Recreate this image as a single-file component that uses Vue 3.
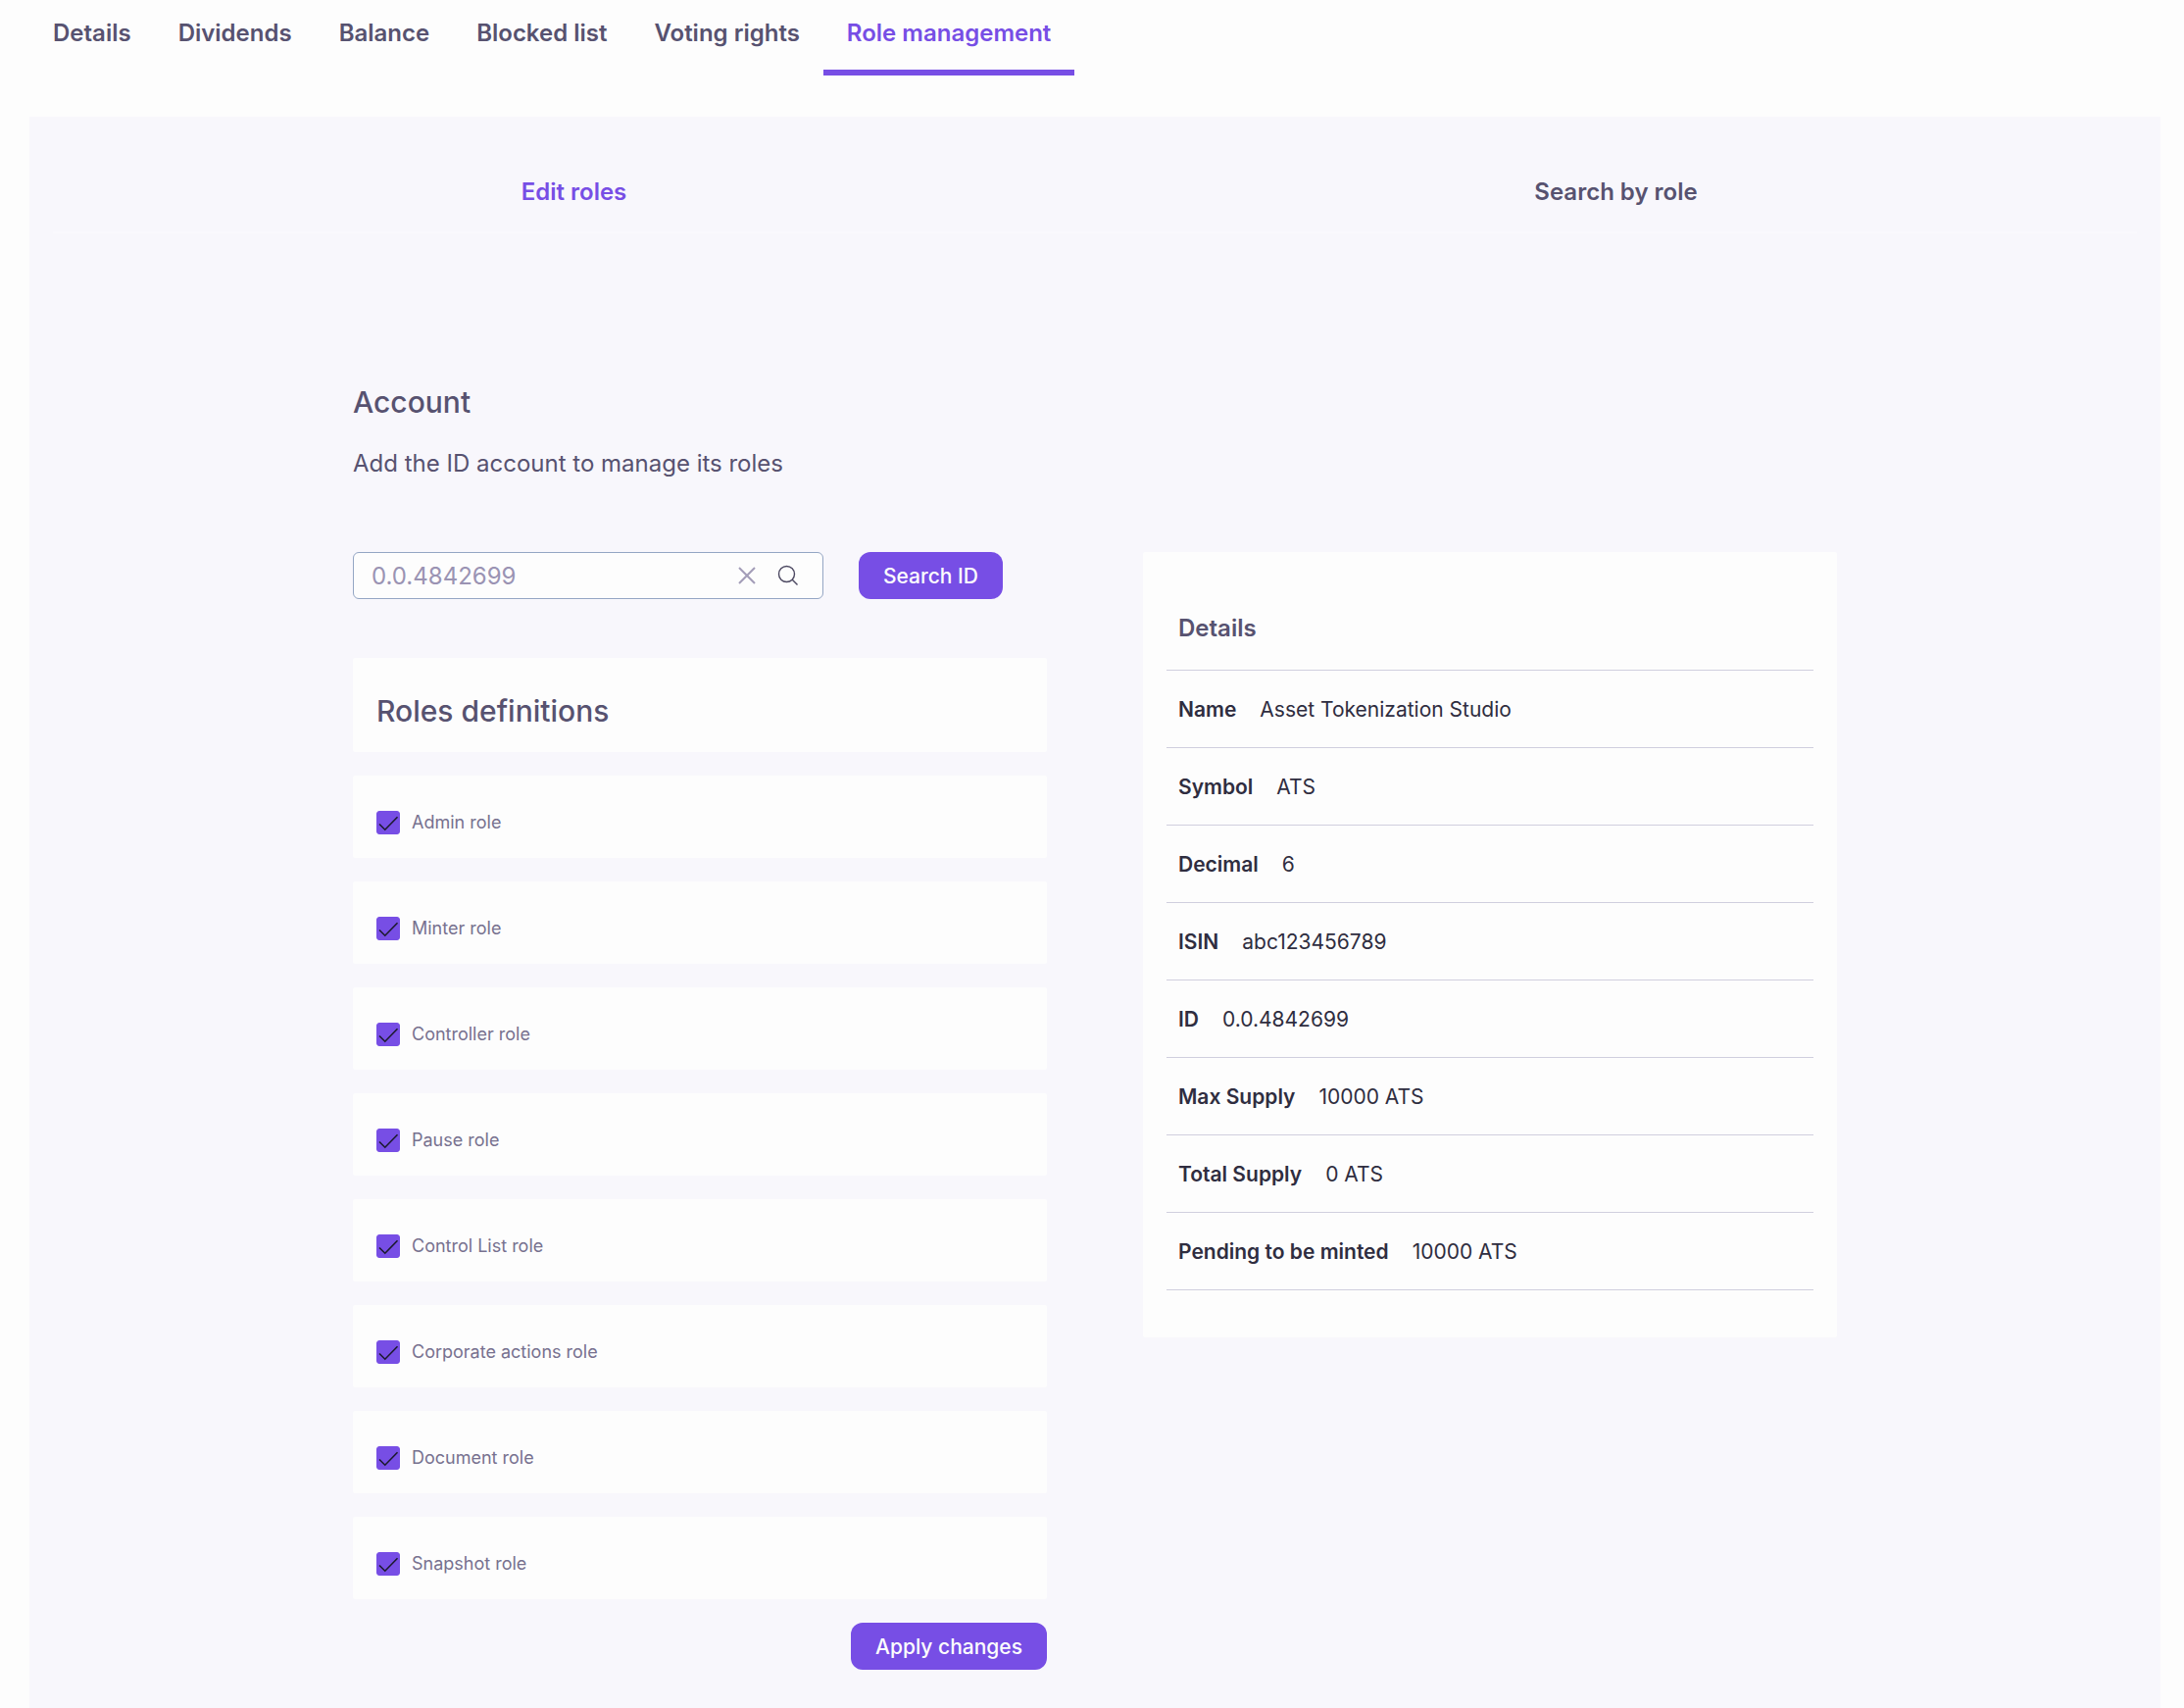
<script setup>
import { ref } from 'vue'

const tabs = ['Details', 'Dividends', 'Balance', 'Blocked list', 'Voting rights', 'Role management']
const activeTab = ref('Role management')

const modes = ['Edit roles', 'Search by role']
const activeMode = ref('Edit roles')

const accountId = ref('0.0.4842699')

const roles = ref([
  { id: 'admin', label: 'Admin role', granted: true },
  { id: 'minter', label: 'Minter role', granted: true },
  { id: 'controller', label: 'Controller role', granted: true },
  { id: 'pause', label: 'Pause role', granted: true },
  { id: 'control-list', label: 'Control List role', granted: true },
  { id: 'corporate-actions', label: 'Corporate actions role', granted: true },
  { id: 'document', label: 'Document role', granted: true },
  { id: 'snapshot', label: 'Snapshot role', granted: true }
])

const details = [
  ['Name', 'Asset Tokenization Studio'],
  ['Symbol', 'ATS'],
  ['Decimal', '6'],
  ['ISIN', 'abc123456789'],
  ['ID', '0.0.4842699'],
  ['Max Supply', '10000 ATS'],
  ['Total Supply', '0 ATS'],
  ['Pending to be minted', '10000 ATS']
]
</script>

<template>
  <div class="page">
    <nav class="tabs" role="tablist">
      <button
        v-for="tab in tabs"
        :key="tab"
        type="button"
        role="tab"
        class="tab"
        :class="{ active: tab === activeTab }"
        :aria-selected="tab === activeTab"
        @click="activeTab = tab"
      >{{ tab }}</button>
    </nav>

    <main class="panel">
      <div class="modes" role="tablist">
        <button
          v-for="mode in modes"
          :key="mode"
          type="button"
          role="tab"
          class="mode"
          :class="{ active: mode === activeMode }"
          :aria-selected="mode === activeMode"
          @click="activeMode = mode"
        >{{ mode }}</button>
      </div>

      <div class="content">
        <header class="intro">
          <h2 class="heading">Account</h2>
          <label class="hint" for="account-id">Add the ID account to manage its roles</label>
        </header>

        <div class="columns">
          <section class="column">
            <form class="search" @submit.prevent>
              <div class="field">
                <input id="account-id" v-model="accountId" class="field-input" type="text" />
                <button type="button" class="icon-button" aria-label="Clear" @click="accountId = ''">
                  <svg width="24" height="24" viewBox="0 0 24 24" fill="none" stroke="#a39db8" stroke-width="2">
                    <path d="M4 4 20 20M20 4 4 20" />
                  </svg>
                </button>
                <button type="submit" class="icon-button" aria-label="Search">
                  <svg width="24" height="24" viewBox="0 0 24 24" fill="none" stroke="#4c4861" stroke-width="1.4">
                    <circle cx="10.5" cy="10.5" r="8" />
                    <path d="M16 16 21.5 21.5" />
                  </svg>
                </button>
              </div>
              <button type="submit" class="primary">Search ID</button>
            </form>

            <form class="roles" @submit.prevent>
              <div class="card title-card">
                <h2 class="heading">Roles definitions</h2>
              </div>
              <div v-for="role in roles" :key="role.id" class="card role-card">
                <label class="role" :for="role.id">
                  <span class="tick">
                    <input :id="role.id" v-model="role.granted" type="checkbox" class="tick-input" />
                    <svg v-if="role.granted" class="tick-mark" viewBox="0 0 24 24" fill="none" stroke="#1c1a2e" stroke-width="1.6">
                      <path d="M3 13.5 8.8 19.2 21.5 6.3" />
                    </svg>
                  </span>
                  {{ role.label }}
                </label>
              </div>
              <button type="submit" class="primary apply">Apply changes</button>
            </form>
          </section>

          <section class="details">
            <h3 class="details-title">Details</h3>
            <dl class="list">
              <div v-for="[name, value] in details" :key="name" class="item">
                <dt>{{ name }}</dt>
                <dd>{{ value }}</dd>
              </div>
            </dl>
          </section>
        </div>
      </div>
    </main>
  </div>
</template>

<style>
body {
  background: #fdfdfd;
}
</style>

<style scoped>
.page {
  box-sizing: border-box;
  display: flex;
  flex-direction: column;
  min-height: 100vh;
  padding: 0 24px 0 30px;
  color: #575270;
  font-family: Inter, sans-serif;
  background: #fdfdfd;
}

.page * {
  box-sizing: border-box;
}

h2,
h3,
dl,
dd {
  margin: 0;
}

button,
input {
  margin: 0;
  padding: 0;
  border: 0;
  color: inherit;
  font: inherit;
  background: none;
}

button {
  cursor: pointer;
}

.tabs {
  display: flex;
  margin-bottom: 42px;
}

.tab {
  height: 77px;
  padding: 0 24px 3px;
  border-bottom: 6px solid transparent;
  font-size: 24px;
  font-weight: 600;
  line-height: 36px;
  white-space: nowrap;
}

.tab.active {
  border-color: #774ee5;
  color: #774ee5;
}

.panel {
  flex: 1;
  padding: 36px 24px 38px;
  background: #f8f7fc;
}

.modes {
  display: grid;
  grid-template-columns: 1fr 1fr;
  border-bottom: 2px solid #faf9fd;
}

.mode {
  height: 81px;
  font-size: 24px;
  font-weight: 600;
}

.mode.active {
  color: #774ee5;
}

.content {
  width: 72%;
  max-width: 1514px;
  margin: 0 auto;
  padding-top: 152px;
}

.intro {
  display: flex;
  flex-direction: column;
  gap: 25px;
  margin-bottom: 72px;
}

.heading {
  font-size: 30px;
  font-weight: 500;
  line-height: 40px;
}

.hint {
  font-size: 24px;
  line-height: 36px;
}

.columns {
  display: grid;
  grid-template-columns: 1fr 1fr;
  align-items: start;
  gap: 98px;
}

.search {
  display: flex;
  gap: 36px;
  margin-bottom: 60px;
}

.field {
  display: flex;
  align-items: center;
  width: 480px;
  height: 48px;
  padding: 0 23px 0 18px;
  border: 1px solid #94a6c4;
  border-radius: 6px;
  gap: 18px;
  background: #fdfdfd;
}

.field-input {
  flex: 1;
  min-width: 0;
  color: #9a93b3;
  font-size: 24px;
  outline: none;
}

.icon-button {
  display: flex;
}

.primary {
  height: 48px;
  padding: 0 25px;
  border-radius: 12px;
  color: #fdfdfd;
  font-size: 21px;
  font-weight: 500;
  white-space: nowrap;
  background: #774ee5;
}

.roles {
  display: flex;
  flex-direction: column;
  gap: 24px;
}

.card {
  padding: 36px 24px 24px;
  border-radius: 2px;
  background: #fdfdfd;
}

.title-card .heading {
  line-height: 36px;
}

.role {
  display: flex;
  align-items: center;
  gap: 12px;
  color: #77718f;
  font-size: 18px;
  line-height: 24px;
}

.tick {
  position: relative;
  display: flex;
  width: 24px;
  height: 24px;
}

.tick-input {
  width: 24px;
  height: 24px;
  border: 1px solid #774ee5;
  border-radius: 3px;
  appearance: none;
}

.tick-input:checked {
  background: #774ee5;
}

.tick-mark {
  position: absolute;
  inset: 0;
  pointer-events: none;
}

.apply {
  align-self: flex-end;
}

.details {
  padding: 60px 24px 48px;
  border-radius: 2px;
  background: #fdfdfd;
}

.details-title {
  padding: 0 12px 24px;
  border-bottom: 1px solid #d0cfde;
  font-size: 24px;
  font-weight: 600;
  line-height: 36px;
}

.item {
  display: flex;
  align-items: center;
  height: 79px;
  padding: 0 12px;
  border-bottom: 1px solid #d0cfde;
  gap: 24px;
  color: #2f2d40;
  font-size: 21px;
}

.item dt {
  font-weight: 600;
}
</style>
